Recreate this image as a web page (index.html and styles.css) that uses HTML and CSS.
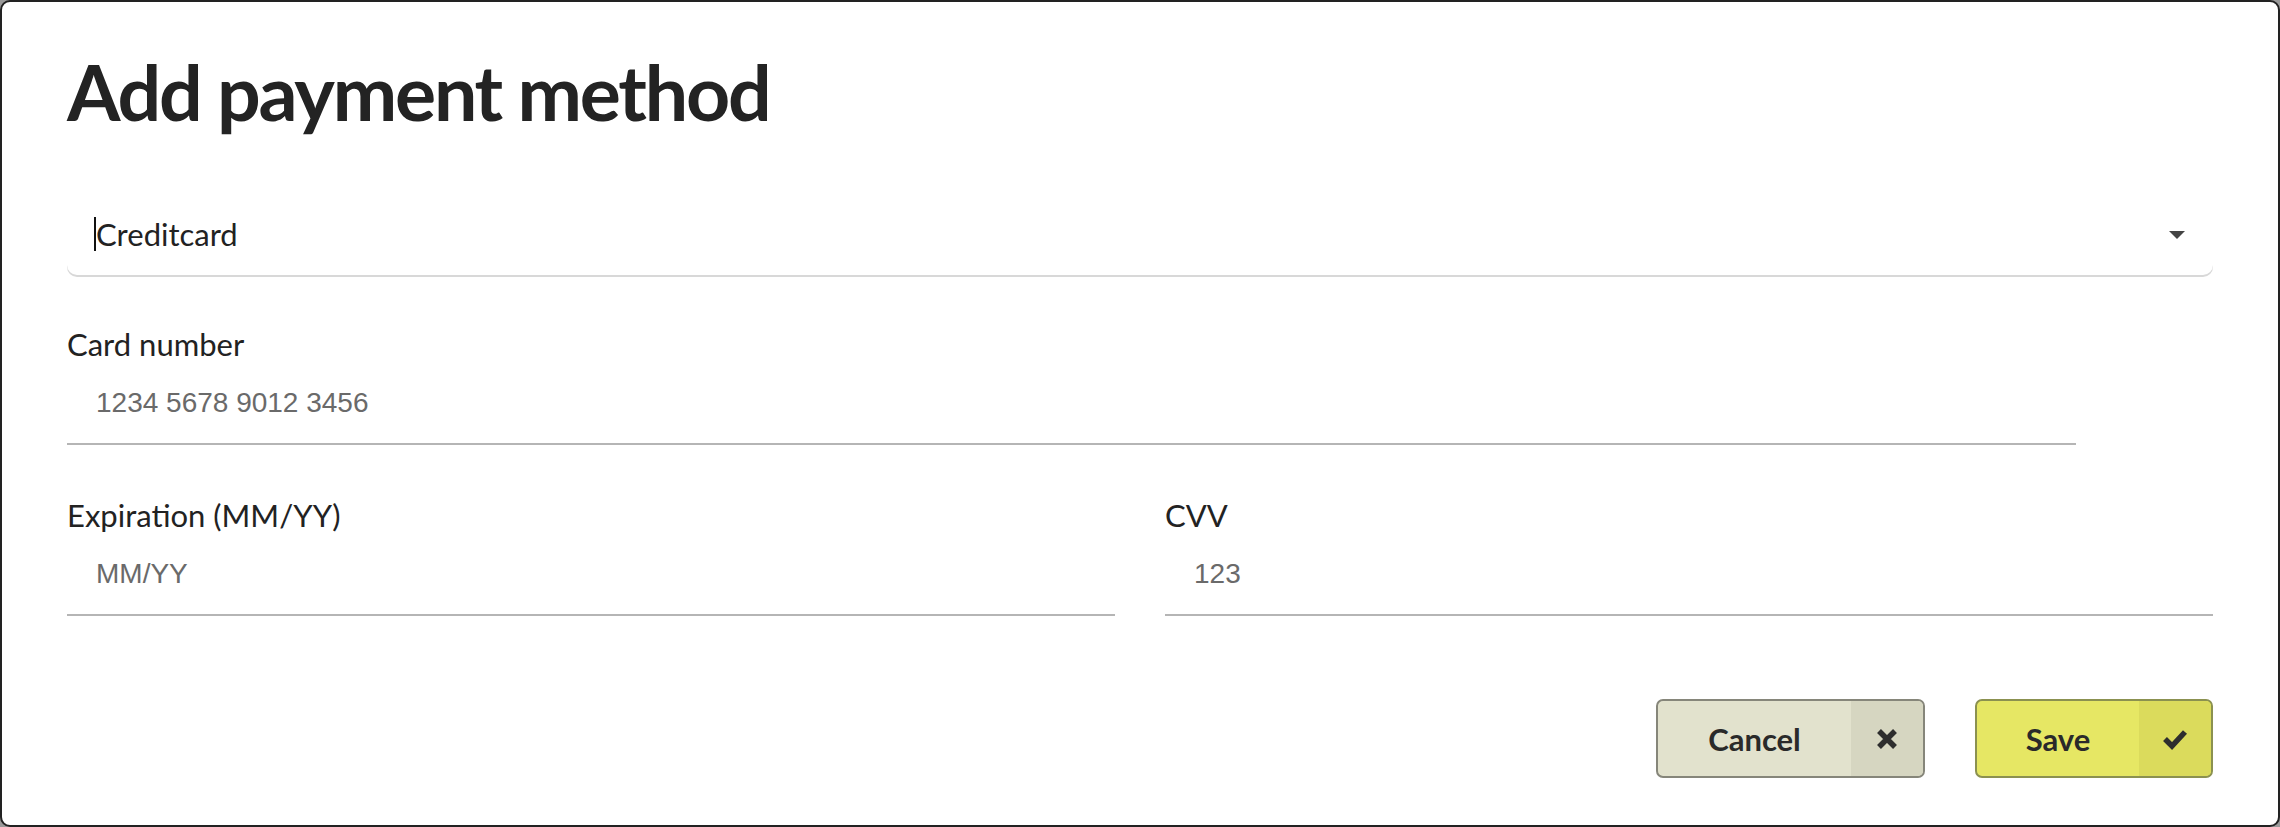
FILE: index.html
```html
<!DOCTYPE html>
<html lang="en">
<head>
<meta charset="utf-8">
<title>Add payment method</title>
<link rel="stylesheet" href="styles.css">
</head>
<body>
<div class="dialog">
  <h1 class="title">Add payment method</h1>
  <div class="select">
    <span class="select-value"><span class="caret"></span>Creditcard</span>
    <span class="select-arrow"></span>
  </div>
  <div class="field field-wide">
    <label class="label">Card number</label>
    <div class="input">1234 5678 9012 3456</div>
  </div>
  <div class="row">
    <div class="field">
      <label class="label">Expiration (MM/YY)</label>
      <div class="input">MM/YY</div>
    </div>
    <div class="field">
      <label class="label">CVV</label>
      <div class="input">123</div>
    </div>
  </div>
  <div class="actions">
    <button class="btn btn-cancel">
      <span class="btn-label">Cancel</span>
      <span class="btn-icon">
        <svg width="22" height="22" viewBox="0 0 22 22"><path d="M3 3 L19 19 M19 3 L3 19" stroke="#2e2e2e" stroke-width="5.5" fill="none"/></svg>
      </span>
    </button>
    <button class="btn btn-save">
      <span class="btn-label">Save</span>
      <span class="btn-icon">
        <svg width="26" height="22" viewBox="0 0 26 22"><path d="M3 11 L10 18 L23 4" stroke="#2e2e2e" stroke-width="5.5" fill="none"/></svg>
      </span>
    </button>
  </div>
</div>
</body>
</html>
```

FILE: styles.css
```css
* { box-sizing: border-box; }
html, body { margin: 0; padding: 0; }
body {
  background: #9a9a9a;
  font-family: Lato, "Noto Sans", sans-serif;
  color: #222;
}
.dialog {
  width: 100vw;
  height: 100vh;
  background: #fff;
  border: 2px solid #222;
  border-radius: 10px;
  padding: 49px 65px 0 65px;
  display: flex;
  flex-direction: column;
}
.title {
  margin: 0;
  font-size: 77px;
  line-height: 80px;
  font-weight: 700;
  letter-spacing: -2.2px;
  color: #232323;
}
.select {
  margin-top: 66px;
  height: 78px;
  display: flex;
  align-items: center;
  justify-content: space-between;
  padding: 0 28px 5px 29px;
  border-radius: 0 0 10px 10px;
  box-shadow: 0 2px 0 #d8d8d8;
}
.select-value {
  font-size: 31px;
  color: #222;
  display: flex;
  align-items: center;
}
.caret {
  display: inline-block;
  width: 2px;
  height: 34px;
  background: #111;
  margin-left: -2px;
}
.select-arrow {
  width: 0;
  height: 0;
  margin-top: 2px;
  border-left: 8px solid transparent;
  border-right: 8px solid transparent;
  border-top: 8px solid #444;
}
.field {
  display: flex;
  flex-direction: column;
}
.field-wide {
  margin-top: 51px;
  width: 2009px;
}
.label {
  font-size: 31px;
  line-height: 36px;
  color: #222;
}
.input {
  height: 83px;
  padding-left: 29px;
  display: flex;
  align-items: center;
  font-family: "Liberation Sans", Arial, sans-serif;
  font-size: 28px;
  color: #6a6a6a;
  border-bottom: 2px solid #b5b5b5;
}
.row {
  margin-top: 52px;
  display: grid;
  grid-template-columns: 1fr 1fr;
  gap: 50px;
}
.actions {
  margin-top: 83px;
  display: flex;
  justify-content: flex-end;
  gap: 50px;
}
.btn {
  height: 79px;
  padding: 0;
  display: flex;
  align-items: stretch;
  border-radius: 7px;
  border: 2px solid #86867a;
  overflow: hidden;
  font-family: Lato, "Noto Sans", sans-serif;
  font-weight: 700;
  font-size: 31px;
  color: #2a2a2a;
  cursor: pointer;
}
.btn-label {
  flex: 1;
  display: flex;
  align-items: center;
  justify-content: center;
}
.btn-icon {
  width: 72px;
  display: flex;
  align-items: center;
  justify-content: center;
}
.btn-cancel { width: 269px; background: #e2e2cd; }
.btn-cancel .btn-icon { background: #d6d6c1; }
.btn-save { width: 238px; background: #e6e764; border-color: #8b9150; }
.btn-save .btn-icon { background: #dbdb5c; }
```
